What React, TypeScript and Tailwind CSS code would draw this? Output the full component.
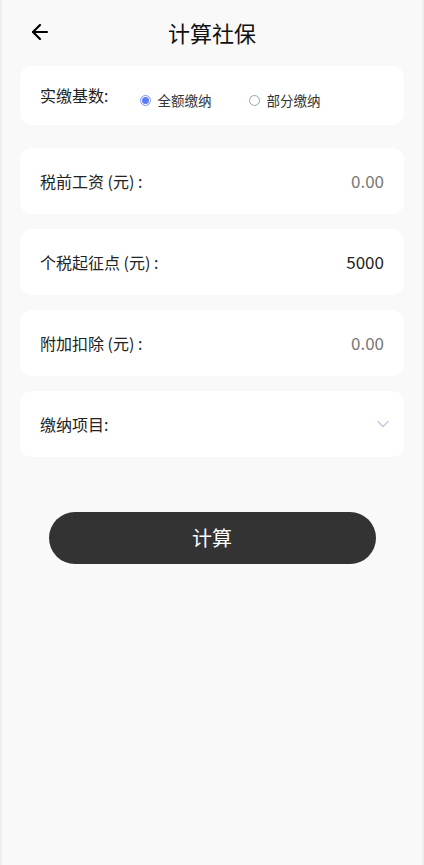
import { ArrowLeft, ChevronDown } from "lucide-react";

const rows = [
  { label: "税前工资 (元) :", value: "0.00", muted: true },
  { label: "个税起征点 (元) :", value: "5000", muted: false },
  { label: "附加扣除 (元) :", value: "0.00", muted: true },
];

function Radio({ checked, label }: { checked: boolean; label: string }) {
  return (
    <div className="flex items-center gap-[6px]">
      <span
        className={`w-[11px] h-[11px] rounded-full border flex items-center justify-center ${
          checked ? "border-[#7b93f0]" : "border-[#9aa0b0]"
        }`}
      >
        {checked && <span className="w-[7px] h-[7px] rounded-full bg-[#5b7cf5]" />}
      </span>
      <span className="text-[13.5px] text-[#333]">{label}</span>
    </div>
  );
}

export default function App() {
  return (
    <div
      className="w-[424px] h-[865px] bg-[#f9f9f9] border-x-2 border-[#efefef] flex flex-col"
      style={{ fontFamily: '"Noto Sans CJK SC", "Noto Sans", sans-serif' }}
    >
      {/* Header */}
      <div className="h-[66px] flex items-center relative px-[26px] pb-[2px]">
        <ArrowLeft className="w-[24px] h-[24px] text-black" strokeWidth={2.2} />
        <h1 className="absolute left-0 right-0 text-center text-[22px] text-[#111] pointer-events-none">
          计算社保
        </h1>
      </div>

      <div className="px-[18px] flex flex-col">
        <div className="bg-white rounded-[12px] h-[59px] flex items-center pl-[20px] gap-[32px]">
          <span className="text-[16px] text-[#222] -mt-[1px]">实缴基数:</span>
          <div className="flex items-center gap-[38px] mt-[10px]">
            <Radio checked label="全额缴纳" />
            <Radio checked={false} label="部分缴纳" />
          </div>
        </div>

        {rows.map((r, i) => (
          <div
            key={r.label}
            className={`bg-white rounded-[12px] h-[66px] flex items-center justify-between pl-[20px] pr-[20px] ${
              i === 0 ? "mt-[23px]" : "mt-[15px]"
            }`}
          >
            <span className="text-[16px] text-[#222] whitespace-pre">{r.label}</span>
            <span className={`text-[17px] ${r.muted ? "text-[#777]" : "text-[#222]"}`}>{r.value}</span>
          </div>
        ))}

        <div className="bg-white rounded-[12px] h-[66px] mt-[15px] flex items-center justify-between pl-[20px] pr-[11px]">
          <span className="text-[16px] text-[#222]">缴纳项目:</span>
          <ChevronDown className="w-[20px] h-[20px] text-[#c3cbe3]" strokeWidth={1.8} />
        </div>
      </div>

      <div className="flex justify-center mt-[55px]">
        <button className="w-[327px] h-[52px] rounded-full bg-[#333333] text-white text-[20px]">
          计算
        </button>
      </div>
    </div>
  );
}
